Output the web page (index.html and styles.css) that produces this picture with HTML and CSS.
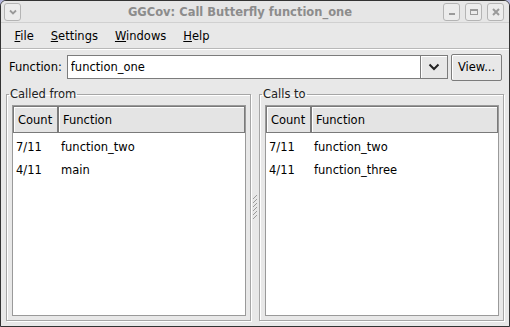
FILE: index.html
```html
<!DOCTYPE html>
<html lang="en">
<head>
    <meta charset="UTF-8">
    <title>GGCov: Call Butterfly function_one</title>
    <link rel="stylesheet" href="styles.css">
</head>
<body>
<div class="window">
    <div class="titlebar">
        <span class="tbtn">
            <svg width="10" height="10" viewBox="0 0 10 10"><path d="M2 3.5 L5 6.5 L8 3.5" fill="none" stroke="#9a9a9a" stroke-width="1.8"/></svg>
        </span>
        <div class="title">GGCov: Call Butterfly function_one</div>
        <div class="tbtns">
            <span class="tbtn">
                <svg width="10" height="10" viewBox="0 0 10 10"><rect x="2" y="6" width="6" height="2" fill="#9a9a9a"/></svg>
            </span>
            <span class="tbtn">
                <svg width="10" height="10" viewBox="0 0 10 10"><rect x="1.5" y="2.5" width="7" height="5" fill="none" stroke="#9a9a9a"/><rect x="1.5" y="2" width="7" height="2" fill="#9a9a9a"/></svg>
            </span>
            <span class="tbtn">
                <svg width="10" height="10" viewBox="0 0 10 10"><path d="M2 2 L8 8 M8 2 L2 8" stroke="#9a9a9a" stroke-width="2"/></svg>
            </span>
        </div>
    </div>

    <div class="menubar">
        <span class="menu"><u>F</u>ile</span>
        <span class="menu"><u>S</u>ettings</span>
        <span class="menu"><u>W</u>indows</span>
        <span class="menu"><u>H</u>elp</span>
    </div>

    <div class="toolbar">
        <label class="fn-label">Function:</label>
        <div class="combo">
            <input type="text" class="entry" value="function_one">
            <span class="combo-btn">
                <svg width="12" height="8" viewBox="0 0 12 8"><path d="M1.5 1.5 L6 6 L10.5 1.5" fill="none" stroke="#222" stroke-width="2"/></svg>
            </span>
        </div>
        <button class="view-btn">View...</button>
    </div>

    <div class="panes">
        <fieldset class="frame">
            <legend>Called from</legend>
            <div class="tree">
                <div class="tree-head">
                    <div class="col-count">Count</div>
                    <div class="col-fn">Function</div>
                </div>
                <div class="tree-rows">
                    <div class="tree-row"><span class="c1">7/11</span><span class="c2">function_two</span></div>
                    <div class="tree-row"><span class="c1">4/11</span><span class="c2">main</span></div>
                </div>
            </div>
        </fieldset>

        <div class="handle">
            <svg width="6" height="26" viewBox="0 0 6 26">
                <path d="M1 5 L5 1 M1 9 L5 5 M1 13 L5 9 M1 17 L5 13 M1 21 L5 17 M1 25 L5 21" stroke="#9a9a9a" stroke-width="1"/>
            </svg>
        </div>

        <fieldset class="frame">
            <legend>Calls to</legend>
            <div class="tree">
                <div class="tree-head">
                    <div class="col-count">Count</div>
                    <div class="col-fn">Function</div>
                </div>
                <div class="tree-rows">
                    <div class="tree-row"><span class="c1">7/11</span><span class="c2">function_two</span></div>
                    <div class="tree-row"><span class="c1">4/11</span><span class="c2">function_three</span></div>
                </div>
            </div>
        </fieldset>
    </div>
</div>
</body>
</html>
```

FILE: styles.css
```css
body { margin: 0; background: #b4b6dc; font-family: "DejaVu Sans", sans-serif; font-size: 11.5px; color: #000; }
.window { width: 508px; height: 325px; border: 1px solid #333; border-radius: 6px 6px 0 0; background: #e8e8e8; display: flex; flex-direction: column; overflow: hidden; }

.titlebar { height: 21px; display: flex; align-items: center; padding: 0 5px 0 3px; border-bottom: 1px solid #d0d0d0; background: #e6e6e6; }
.title { flex: 1; text-align: center; padding-left: 16px; font-weight: bold; color: #8c8c8c; font-size: 11.5px; }
.tbtns { display: flex; gap: 5px; }
.tbtn { width: 15px; height: 16px; border: 1px solid #b4b4b4; border-radius: 3px; display: flex; align-items: center; justify-content: center; background: #ececec; }

.menubar { height: 25px; display: flex; align-items: center; padding-left: 5px; border-bottom: 1px solid #b8b8b8; box-shadow: 0 1px 0 #fff; }
.menu { padding: 0 8.5px; }

.toolbar { height: 36px; display: flex; align-items: center; padding: 0 7px 0 8px; }
.fn-label { margin-right: 5px; }
.combo { flex: 1; display: flex; height: 24px; }
.entry { flex: 1; margin: 0; height: 24px; box-sizing: border-box; border: 1px solid #7c7c7c; padding: 0 3px; font: inherit; background: #fff; outline: none; }
.combo-btn { width: 27px; height: 24px; box-sizing: border-box; border: 1px solid #7c7c7c; border-left: none; display: flex; align-items: center; justify-content: center; background: #e8e8e8; box-shadow: inset 1px 1px 0 #fff; }
.view-btn { margin-left: 3px; width: 51px; height: 27px; font: inherit; padding: 0; border: 1px solid #7c7c7c; border-radius: 2px; background: #e8e8e8; box-shadow: inset 1px 1px 0 #fff; color: #000; }

.panes { flex: 1; display: flex; padding: 0 5px 5px 5px; min-height: 0; }
.frame { flex: 1; margin: 2px 0 0 0; padding: 4px 4px 4px 5px; border: 1px solid #a6a6a6; box-shadow: inset 1px 1px 0 #fff, 1px 1px 0 #fff; display: flex; flex-direction: column; min-width: 0; }
.frame legend { padding: 0 1px; margin-left: -3px; color: #222; line-height: 14px; }
.handle { width: 8px; display: flex; align-items: center; justify-content: center; padding-top: 8px; }

.tree { flex: 1; background: #fff; border: 1px solid #9a9a9a; }
.tree-head { display: flex; height: 27px; }
.tree-head div { box-sizing: border-box; border: 1px solid #7a7a7a; box-shadow: inset 1px 1px 0 #fff; background: #e4e4e4; display: flex; align-items: center; padding-left: 4px; }
.col-count { width: 45px; }
.col-fn { flex: 1; }
.tree-rows { padding-top: 2px; }
.tree-row { display: flex; height: 23px; align-items: center; }
.c1 { width: 45px; padding-left: 3px; box-sizing: border-box; }
.c2 { padding-left: 3px; }
```
